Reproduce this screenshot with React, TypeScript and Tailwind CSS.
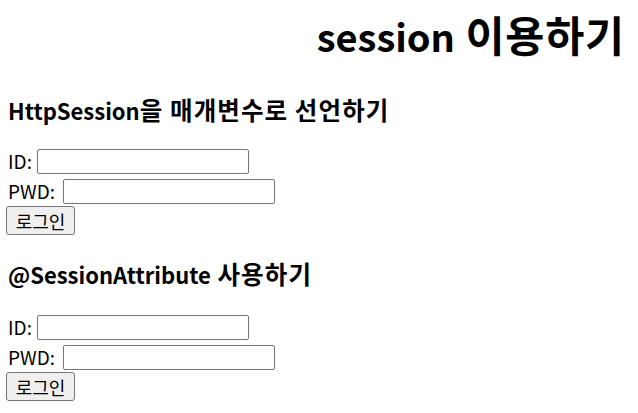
import React from "react";

const font = { fontFamily: '"Noto Sans CJK KR", "Noto Sans", sans-serif' };

function LoginForm() {
  return (
    <div className="flex flex-col items-start">
      <div className="flex items-center h-[25px] text-[19px] text-black">
        <span className="w-[29px]">ID:</span>
        <input
          type="text"
          className="w-[212px] h-[25px] border border-[#767676] rounded-[2px] bg-white px-1 text-[16px]"
        />
      </div>
      <div className="flex items-center h-[25px] mt-[5px] text-[19px] text-black">
        <span className="w-[55px]">PWD:</span>
        <input
          type="password"
          className="w-[212px] h-[25px] border border-[#767676] rounded-[2px] bg-white px-1 text-[16px]"
        />
      </div>
      <button
        type="button"
        className="mt-[2px] -ml-[2px] w-[69px] h-[29px] border border-[#767676] rounded-[3px] bg-[#efefef] text-[18px] text-black leading-none flex items-center justify-center"
      >
        로그인
      </button>
    </div>
  );
}

export default function App() {
  return (
    <div className="bg-white w-[638px] min-h-[413px] px-[8px] pt-[10px]" style={font}>
      <h1 className="text-right text-[38px] font-bold leading-[52px] h-[52px] pr-[5px] text-black whitespace-pre">
        session<span className="text-[42.5px] leading-none tracking-[0.8px]"> 이용하기</span>
      </h1>
      <h3 className="mt-[33px] text-[22px] font-bold leading-[30px] h-[30px] text-black whitespace-pre">
        HttpSession<span className="text-[24.5px] leading-none tracking-[1.1px]">을 매개변수로 선언하기</span>
      </h3>
      <div className="mt-[24px]">
        <LoginForm />
      </div>
      <h3 className="mt-[24px] text-[22px] font-bold leading-[30px] h-[30px] text-black whitespace-pre">
        @SessionAttribute<span className="text-[24.5px] leading-none tracking-[1.1px]"> 사용하기</span>
      </h3>
      <div className="mt-[26px]">
        <LoginForm />
      </div>
    </div>
  );
}
